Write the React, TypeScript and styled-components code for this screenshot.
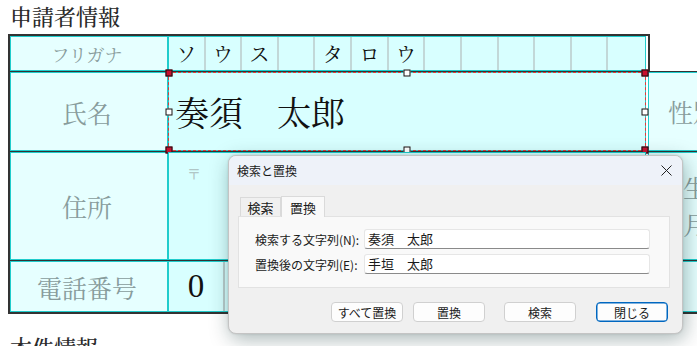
import React from "react";
import styled, { createGlobalStyle } from "styled-components";

const Global = createGlobalStyle`
  html, body { margin: 0; padding: 0; background: #fff; overflow: hidden; }
  body { font-family: "Noto Sans CJK JP", "Noto Sans", sans-serif; }
`;

const SERIF = `"Noto Serif CJK JP", "Noto Sans CJK JP", "Liberation Serif", serif`;
const CYAN = "#20cccc";
const DARK = "#333";

const Page = styled.div`
  position: relative;
  width: 697px;
  height: 346px;
  padding-left: 8px;
  box-sizing: border-box;
  overflow: hidden;
`;

const Heading = styled.h2`
  margin: 3px 0 5px 2px;
  height: 26px;
  line-height: 26px;
  font-family: ${SERIF};
  font-size: 22px;
  font-weight: 500;
  color: #2a2a2a;
  white-space: nowrap;
`;

const Heading2 = styled(Heading)`
  margin-top: 20px;
`;

const Table = styled.div`
  display: flex;
  flex-direction: column;
  width: 760px;
  border-left: 2px solid ${DARK};
`;

const Row = styled.div<{ $first?: boolean; $last?: boolean; $h: number }>`
  display: flex;
  height: ${(p) => p.$h}px;
  width: ${(p) => (p.$first ? "638px" : "auto")};
  border-top: ${(p) => (p.$first ? `2px solid ${DARK}` : "1px solid #333")};
  margin-top: ${(p) => (p.$first ? "0" : "-1px")};
  border-right: ${(p) => (p.$first ? `2px solid ${DARK}` : "none")};
  border-bottom: ${(p) => (p.$last ? "2px" : "1px")} solid ${DARK};
  box-sizing: content-box;
`;

const LabelCell = styled.div<{ $size: number }>`
  width: 158px;
  flex: none;
  box-sizing: border-box;
  border: 1px solid ${CYAN};
  background: #e6ffff;
  display: flex;
  align-items: center;
  justify-content: center;
  padding-right: 4px;
  font-family: ${SERIF};
  font-size: ${(p) => p.$size}px;
  color: #889c9c;
  white-space: nowrap;
`;

const ValueCell = styled.div<{ $align?: string }>`
  position: relative;
  width: 478px;
  flex: none;
  box-sizing: border-box;
  border: 1px solid ${CYAN};
  background: #d8ffff;
  display: flex;
  align-items: ${(p) => p.$align || "stretch"};
`;

const SideLabel = styled.div<{ $pl: number }>`
  width: 120px;
  flex: none;
  box-sizing: border-box;
  border: 1px solid ${CYAN};
  margin-left: 2px;
  background: #e6ffff;
  display: flex;
  align-items: center;
  padding-left: ${(p) => p.$pl}px;
  font-family: ${SERIF};
  font-size: 25px;
  line-height: 37px;
  color: #889c9c;
`;

const KanaGrid = styled.div`
  display: grid;
  grid-template-columns: repeat(13, 1fr);
  width: 100%;
`;

const KanaBox = styled.div`
  display: flex;
  align-items: center;
  justify-content: center;
  border-right: 2px solid #c2d8d8;
  font-family: ${SERIF};
  font-size: 20px;
  color: #111;
  &:last-child { border-right: none; }
`;

const NameText = styled.div`
  align-self: center;
  padding-left: 6px;
  font-family: ${SERIF};
  font-size: 34px;
  color: #111;
  white-space: pre;
`;

const Selection = styled.div`
  position: absolute;
  inset: -1px;
  border: 1px dashed #e23a3a;
  pointer-events: none;
`;

const Handle = styled.div<{ $filled?: boolean }>`
  position: absolute;
  width: 7px;
  height: 7px;
  box-sizing: border-box;
  border: 1px solid #111;
  background: ${(p) => (p.$filled ? "#c8102e" : "#fff")};
  transform: translate(-50%, -50%);
`;

const Postal = styled.div`
  padding: 10px 0 0 18px;
  font-size: 14px;
  color: #b0c6c6;
`;

const DigitBox = styled.div`
  width: 54px;
  flex: none;
  display: flex;
  align-items: center;
  justify-content: center;
  border-right: 2px solid #b9cccc;
  font-family: "Liberation Serif", serif;
  font-size: 33px;
  color: #111;
`;

/* Dialog */
const Dialog = styled.div`
  position: absolute;
  left: 228px;
  top: 155px;
  width: 455px;
  height: 179px;
  box-sizing: border-box;
  border: 1px solid #c4c4c4;
  border-radius: 8px;
  background: #f0f0f0;
  box-shadow: 2px 5px 20px rgba(0, 40, 40, 0.34), 0 0 2px rgba(0, 0, 0, 0.15);
  overflow: hidden;
  font-family: "Noto Sans CJK JP", sans-serif;
  color: #1a1a1a;
`;

const TitleBar = styled.div`
  height: 29px;
  background: #eef2f9;
  display: flex;
  align-items: center;
  justify-content: space-between;
  padding: 0 10px 0 8px;
  font-size: 12px;
`;

const DialogBody = styled.div`
  padding: 10px 12px 0 9px;
`;

const TabStrip = styled.div`
  display: flex;
  align-items: flex-end;
  height: 21px;
  margin-left: 2px;
`;

const Tab = styled.div<{ $active?: boolean }>`
  height: ${(p) => (p.$active ? 21 : 19)}px;
  width: ${(p) => (p.$active ? 44 : 41)}px;
  box-sizing: border-box;
  border: 1px solid #dadada;
  border-bottom: none;
  background: ${(p) => (p.$active ? "#f9f9f9" : "#f0f0f0")};
  display: flex;
  align-items: center;
  justify-content: center;
  font-size: 13px;
  margin-bottom: ${(p) => (p.$active ? "-1px" : "0")};
  position: relative;
  z-index: ${(p) => (p.$active ? 1 : 0)};
`;

const Panel = styled.div`
  height: 72px;
  box-sizing: border-box;
  border: 1px solid #e2e2e2;
  background: #f9f9f9;
  padding: 12px 19px 0 16px;
  display: flex;
  flex-direction: column;
  gap: 5px;
`;

const FieldRow = styled.div`
  display: flex;
  align-items: center;
  height: 20px;
`;

const FieldLabel = styled.div`
  width: 109px;
  flex: none;
  font-size: 12px;
  white-space: nowrap;
`;

const Input = styled.div`
  flex: 1;
  height: 20px;
  box-sizing: border-box;
  background: #fff;
  border: 1px solid #e6e6e6;
  border-bottom: 1px solid #8a8a8a;
  border-radius: 3px;
  padding-left: 3px;
  font-size: 13px;
  line-height: 18px;
  white-space: pre;
`;

const ButtonRow = styled.div`
  display: flex;
  margin-top: 14px;
  padding-left: 93px;
`;

const Button = styled.div<{ $ml: number; $primary?: boolean }>`
  width: 72px;
  height: 20px;
  box-sizing: border-box;
  margin-left: ${(p) => p.$ml}px;
  border: 1px solid ${(p) => (p.$primary ? "#0067c0" : "#d0d0d0")};
  box-shadow: ${(p) => (p.$primary ? "inset 0 0 0 0.5px #0067c0" : "none")};
  border-radius: 4px;
  background: #fdfdfd;
  display: flex;
  align-items: center;
  justify-content: center;
  font-size: 12px;
`;

const CloseIcon = () => (
  <svg width="11" height="11" viewBox="0 0 11 11">
    <path d="M0.5 0.5 L10.5 10.5 M10.5 0.5 L0.5 10.5" stroke="#222" strokeWidth="1" />
  </svg>
);

const kana = ["ソ", "ウ", "ス", "", "タ", "ロ", "ウ", "", "", "", "", "", ""];

export default function App() {
  return (
    <>
      <Global />
      <Page>
        <Heading>申請者情報</Heading>
        <Table>
          <Row $first $h={35}>
            <LabelCell $size={18}>フリガナ</LabelCell>
            <ValueCell>
              <KanaGrid>
                {kana.map((k, i) => (
                  <KanaBox key={i}>{k}</KanaBox>
                ))}
              </KanaGrid>
            </ValueCell>
          </Row>
          <Row $h={79}>
            <LabelCell $size={25}>氏名</LabelCell>
            <ValueCell>
              <NameText>{"奏須　太郎"}</NameText>
              <Selection />
              <Handle $filled style={{ left: 0, top: 0 }} />
              <Handle style={{ left: "50%", top: 0 }} />
              <Handle $filled style={{ left: "100%", top: 0 }} />
              <Handle style={{ left: 0, top: "50%" }} />
              <Handle style={{ left: "100%", top: "50%" }} />
              <Handle $filled style={{ left: 0, top: "100%" }} />
              <Handle style={{ left: "50%", top: "100%" }} />
              <Handle $filled style={{ left: "100%", top: "100%" }} />
            </ValueCell>
            <SideLabel $pl={19}>性別</SideLabel>
          </Row>
          <Row $h={108}>
            <LabelCell $size={25}>住所</LabelCell>
            <ValueCell>
              <Postal>〒</Postal>
            </ValueCell>
            <SideLabel $pl={34}>
              生年
              <br />
              月日
            </SideLabel>
          </Row>
          <Row $last $h={51}>
            <LabelCell $size={25}>電話番号</LabelCell>
            <ValueCell>
              <DigitBox>0</DigitBox>
              <DigitBox>3</DigitBox>
              <DigitBox></DigitBox>
              <DigitBox></DigitBox>
            </ValueCell>
            <SideLabel $pl={19}></SideLabel>
          </Row>
        </Table>
        <Heading2>本件情報</Heading2>

        <Dialog>
          <TitleBar>
            <span>検索と置換</span>
            <CloseIcon />
          </TitleBar>
          <DialogBody>
            <TabStrip>
              <Tab>検索</Tab>
              <Tab $active>置換</Tab>
            </TabStrip>
            <Panel>
              <FieldRow>
                <FieldLabel>検索する文字列(N):</FieldLabel>
                <Input>{"奏須　太郎"}</Input>
              </FieldRow>
              <FieldRow>
                <FieldLabel>置換後の文字列(E):</FieldLabel>
                <Input>{"手垣　太郎"}</Input>
              </FieldRow>
            </Panel>
            <ButtonRow>
              <Button $ml={0}>すべて置換</Button>
              <Button $ml={10}>置換</Button>
              <Button $ml={19}>検索</Button>
              <Button $ml={20} $primary>
                閉じる
              </Button>
            </ButtonRow>
          </DialogBody>
        </Dialog>
      </Page>
    </>
  );
}
